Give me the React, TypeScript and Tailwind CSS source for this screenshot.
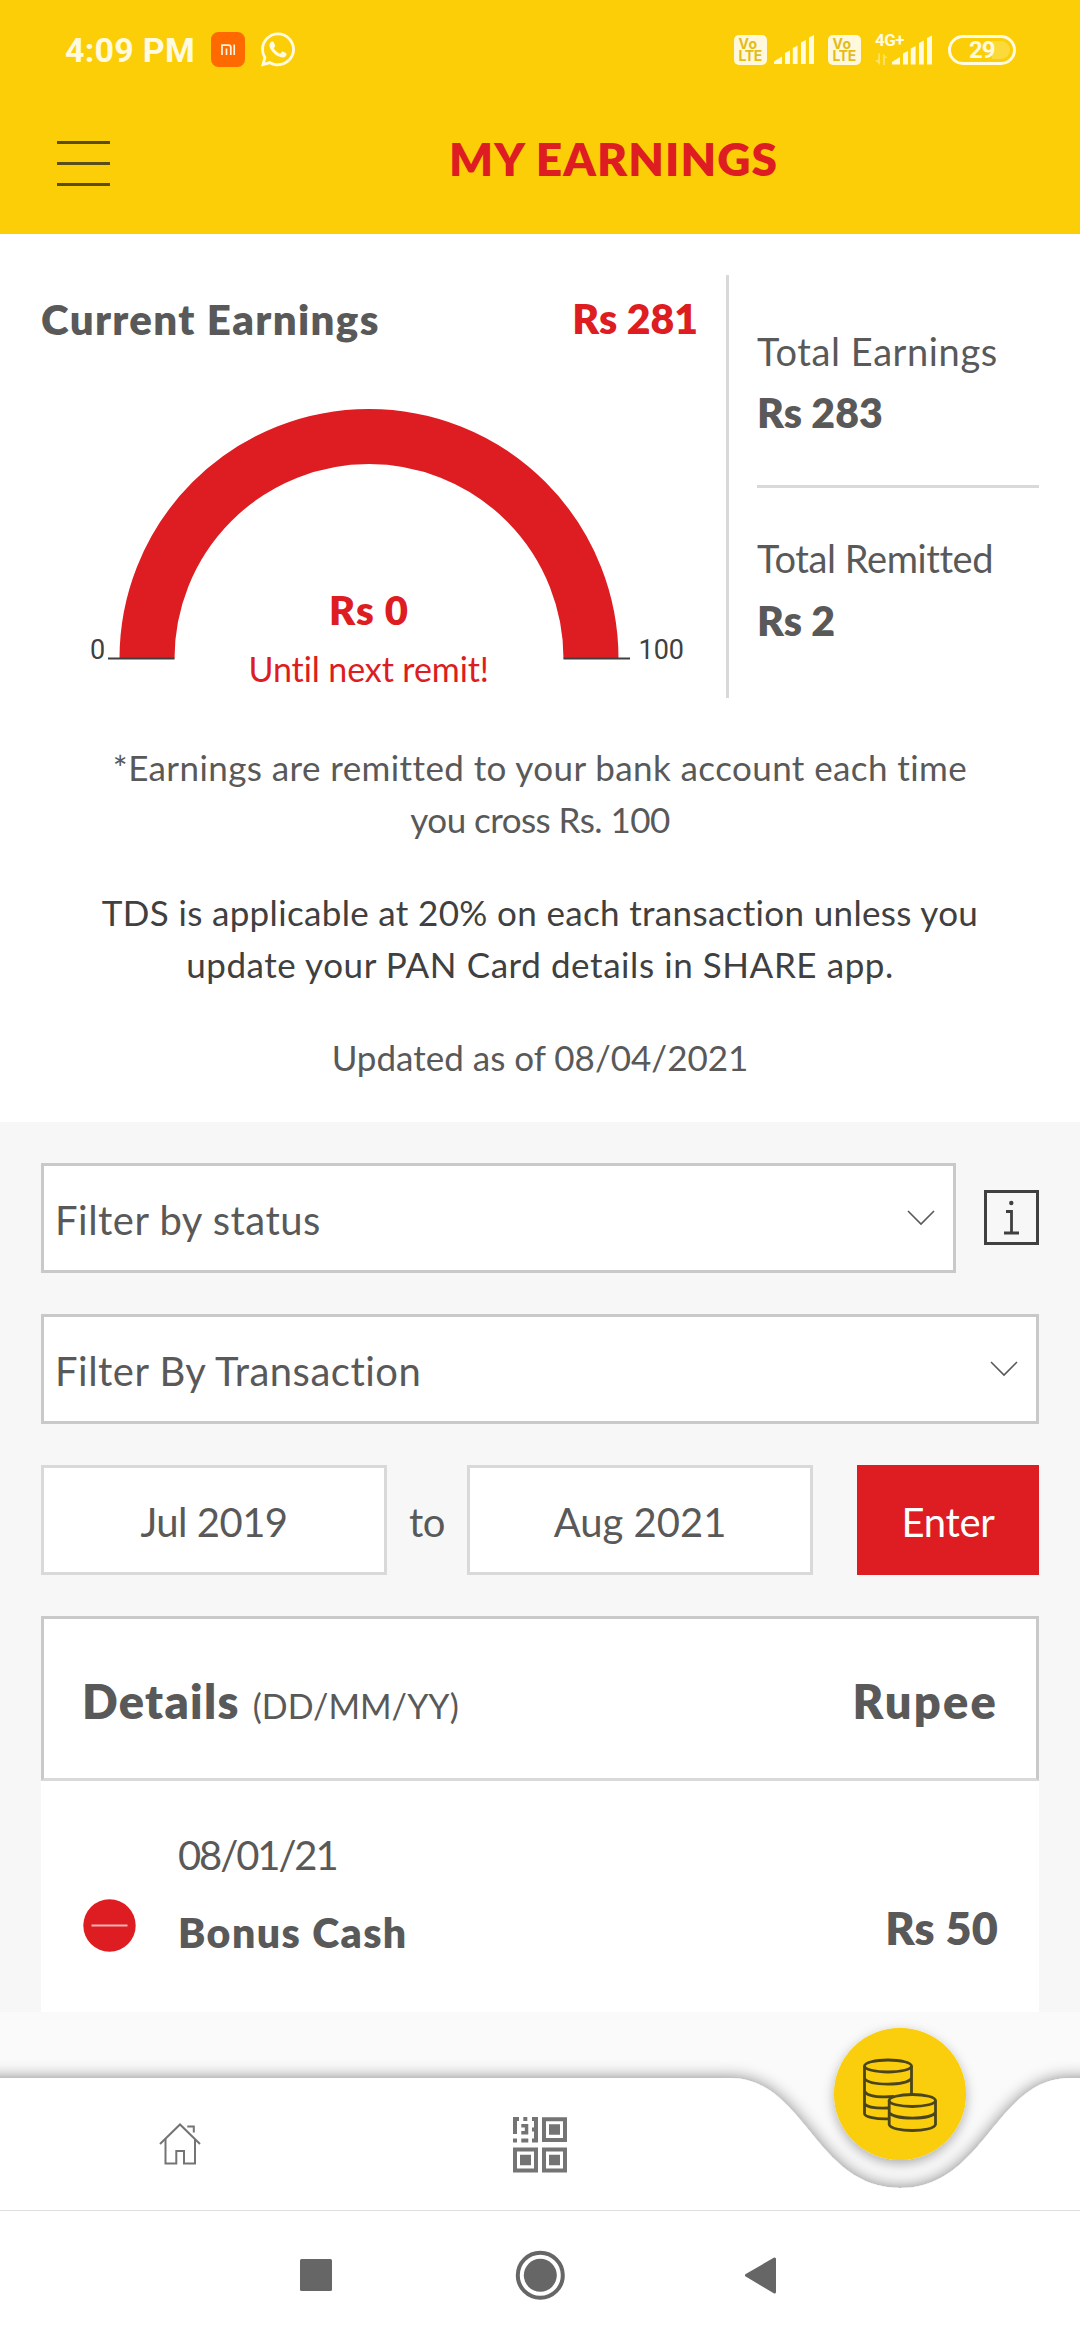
import type { ReactNode } from "react";
import { FaWhatsapp } from "react-icons/fa";

function SignalBars() {
  return (
    <g fill="#fffae0">
      <path d="M0 29V26.5L8 21.5V29Z" />
      <path d="M11 29V18L16 15.5V29Z" />
      <path d="M18.8 29V13L23.6 10.5V29Z" />
      <path d="M27 29V7.5L31.8 5V29Z" />
      <path d="M35 29V2.5L40 0V29Z" />
    </g>
  );
}

function VoLte() {
  return (
    <div className="flex h-[30px] w-[33px] flex-col rounded-[5px] bg-[#fff8dc] pl-[4.5px] pt-[3px] font-['Inter'] text-[14px] font-bold leading-[12.5px] text-[#e3bc1c]">
      <span className="tracking-[0.4px]">Vo</span>
      <span className="tracking-[-0.4px]">LTE</span>
    </div>
  );
}

function StatusBar() {
  return (
    <div className="flex h-[99px] items-center pl-[65px] pr-[64px]">
      <div className="w-[146px] whitespace-nowrap pt-[1px] font-['Roboto'] text-[34px] font-bold leading-[40px] tracking-[0.26px] text-[#fffae0]">
        4:09 PM
      </div>
      <svg className="h-[35px] w-[34px]" viewBox="0 0 34 35">
        <rect width="34" height="35" rx="7.5" fill="#ff6a00" />
        <g fill="none" stroke="#fff5e0" strokeWidth="1.7">
          <path d="M11 23V13.2H17.5Q19.8 13.2 19.8 15.5V23" />
          <path d="M15.5 16.5V23M23.2 12.4V23" />
        </g>
      </svg>
      <FaWhatsapp className="ml-[16px] h-[39px] w-[34px] text-[#fffae0]" />
      <div className="ml-auto flex items-center">
        <VoLte />
        <svg className="ml-[7px] h-[29px] w-[40px]" viewBox="0 0 40 29">
          <SignalBars />
        </svg>
        <div className="ml-[14px]">
          <VoLte />
        </div>
        <svg className="ml-[14px] h-[33px] w-[57px] overflow-visible" viewBox="0 0 57 33">
          <text x="0" y="12.5" fill="#fffae0" fontFamily="Roboto" fontWeight="700" fontSize="17" letterSpacing="-0.6">
            4G+
          </text>
          <g fill="#fffae0" opacity="0.45">
            <path d="M3.2 20.500H5V32L0 27H3.2Z" />
            <path d="M8 32V20.500L12.500 25H10V32Z" />
          </g>
          <g transform="translate(17 2.5)">
            <SignalBars />
          </g>
        </svg>
        <div className="relative ml-[16px] flex h-[30px] w-[68px] items-center rounded-full border-[3px] border-[#fffae0] pl-[18px] font-['Roboto'] text-[24px] font-bold leading-[24px] tracking-[-1px] text-[#fffae0]">
          <span className="absolute right-[3px] top-[3px] h-[18px] w-[18px] rounded-r-full bg-[#fff0a0]/35" />
          <span className="relative">29</span>
        </div>
      </div>
    </div>
  );
}

function Header() {
  return (
    <header className="h-[234px] bg-[#fbce07]">
      <StatusBar />
      <div className="flex items-start pl-[57px]">
        <div className="mt-[42px] flex w-[53px] flex-col gap-[18px]">
          <span className="h-[3px] bg-[#5a4d18]" />
          <span className="h-[3px] bg-[#5a4d18]" />
          <span className="h-[3px] bg-[#5a4d18]" />
        </div>
        <h1 className="ml-[339px] mt-[37px] whitespace-nowrap text-[46px] font-extrabold leading-[46px] tracking-[1.05px] text-[#dd1d21]">
          MY EARNINGS
        </h1>
      </div>
    </header>
  );
}

function Gauge() {
  return (
    <svg className="block h-[355px] w-[685px]" viewBox="41 343 685 355">
      <path d="M147 658.5A222 222 0 0 1 591 658.5" fill="none" stroke="#dd1d21" strokeWidth="55" />
      <path d="M108 658.5H174.5M563.5 658.5H630" stroke="#404040" strokeWidth="2" />
      <g fill="#404040" fontFamily="Roboto" fontSize="27">
        <text x="90" y="659">0</text>
        <text x="638.5" y="659">100</text>
      </g>
      <g fill="#dd1d21" fontFamily="Lato">
        <text x="329" y="625" fontSize="40" fontWeight="800" letterSpacing="0.9">
          Rs 0
        </text>
        <text x="248.5" y="682.3" fontSize="34" letterSpacing="-0.09">
          Until next remit!
        </text>
      </g>
    </svg>
  );
}

function Summary() {
  return (
    <section className="h-[888px] bg-white pt-[41px]">
      <div className="flex h-[423px] pl-[41px] pr-[41px]">
        <div className="w-[688px] border-r-[3px] border-[#d9d9d9]">
          <div className="flex h-[68px] justify-between pr-[28px] pt-[20px] text-[41px] font-extrabold leading-[48px]">
            <span className="text-[42px] tracking-[1.35px] text-[#595959]">Current Earnings</span>
            <span className="text-[#dd1d21]">Rs 281</span>
          </div>
          <Gauge />
        </div>
        <div className="ml-[28px] w-[282px] pt-[53px] text-[#595959]">
          <div className="whitespace-nowrap text-[38px] leading-[46px] tracking-[0.6px]">Total Earnings</div>
          <div className="mt-[14px] text-[41px] font-extrabold leading-[50px]">Rs 283</div>
          <div className="mt-[47px] h-[3px] bg-[#d9d9d9]" />
          <div className="mt-[47px] whitespace-nowrap text-[38px] leading-[46px] tracking-[-0.4px]">Total Remitted</div>
          <div className="mt-[15px] text-[41px] font-extrabold leading-[50px]">Rs 2</div>
        </div>
      </div>
      <div className="mt-[43px] text-center text-[35px] leading-[52px] text-[#595959]">
        <p>
          <span className="block tracking-[0.41px]">*Earnings are remitted to your bank account each time</span>
          <span className="block tracking-[-0.55px]">you cross Rs. 100</span>
        </p>
        <p className="mt-[41px] text-[#404040]">
          <span className="block tracking-[0.34px]">TDS is applicable at 20% on each transaction unless you</span>
          <span className="block tracking-[0.57px]">update your PAN Card details in SHARE app.</span>
        </p>
        <p className="mt-[41px]">Updated as of 08/04/2021</p>
      </div>
    </section>
  );
}

function Select({ children }: { children: ReactNode }) {
  return (
    <div className="flex h-[110px] flex-1 items-center justify-between border-[3px] border-[#c9c9c9] bg-white pl-[11px] pr-[18px]">
      <span className="pt-[3px] text-[40px] leading-[48px] tracking-[0.5px]">{children}</span>
      <svg className="h-[16px] w-[28px]" viewBox="0 0 28 16" fill="none" stroke="#595959" strokeWidth="1.6">
        <path d="M1 1L14 14L27 1" />
      </svg>
    </div>
  );
}

function DateField({ children }: { children: ReactNode }) {
  return (
    <div className="flex h-[110px] w-[346px] items-center justify-center border-[3px] border-[#d9d9d9] bg-white pt-[3px]">
      {children}
    </div>
  );
}

function Filters() {
  return (
    <div className="flex flex-col gap-[41px] text-[40px] leading-[48px] text-[#595959]">
      <div className="flex items-center gap-[28px]">
        <Select>Filter by status</Select>
        <svg className="mb-[1px] h-[55px] w-[55px]" viewBox="0 0 55 55">
          <rect x="1.5" y="1.5" width="52" height="52" fill="none" stroke="#404040" strokeWidth="3" />
          <circle cx="27.3" cy="13" r="2.2" fill="#404040" />
          <path d="M22 21.5H27.5V43M20 43H35" fill="none" stroke="#404040" strokeWidth="2.8" />
        </svg>
      </div>
      <div className="flex">
        <Select>Filter By Transaction</Select>
      </div>
      <div className="flex items-center">
        <DateField>
          <span className="tracking-[-0.5px]">Jul 2019</span>
        </DateField>
        <span className="w-[80px] pt-[3px] text-center tracking-[-0.5px]">to</span>
        <DateField>Aug 2021</DateField>
        <button className="ml-auto h-[110px] w-[182px] bg-[#dd1d21] pt-[3px] tracking-[-0.3px] text-white">Enter</button>
      </div>
    </div>
  );
}

function Transactions() {
  return (
    <div className="mt-[41px] text-[#595959]">
      <div className="flex h-[165px] items-baseline border-[3px] border-b-[#d9d9d9] border-x-[#c9c9c9] border-t-[#c9c9c9] bg-white pl-[38px] pr-[38px] pt-[55px]">
        <span className="text-[47px] font-extrabold leading-[54px] tracking-[1.3px]">Details</span>
        <span className="ml-[13px] text-[34px] leading-[54px]">(DD/MM/YY)</span>
        <span className="ml-auto text-[47px] font-extrabold leading-[54px] tracking-[2.2px]">
          Rupee
        </span>
      </div>
      <div className="flex h-[231px] items-start bg-white pl-[42px] pr-[41px]">
        <svg className="mt-[118px] h-[53px] w-[53px]" viewBox="0 0 53 53">
          <circle cx="26.5" cy="26.5" r="26.2" fill="#dd1d21" />
          <path d="M8.5 26.5H44.5" stroke="#f3b4b5" strokeWidth="2" />
        </svg>
        <div className="ml-[42px] pt-[50px] text-[40px] leading-[48px]">
          <div className="tracking-[-2.1px]">08/01/21</div>
          <div className="mt-[30px] text-[41px] font-extrabold tracking-[1.45px]">Bonus Cash</div>
        </div>
        <span className="ml-auto mt-[123px] text-[45px] font-extrabold leading-[48px] tracking-[0.2px]">Rs 50</span>
      </div>
    </div>
  );
}

function TabBar() {
  return (
    <nav className="h-[198px] bg-[#fafafa]">
      <svg className="block h-[198px] w-[1080px]" viewBox="0 2012 1080 198">
        <defs>
          <filter id="edge" x="-10%" y="-30%" width="120%" height="160%">
            <feDropShadow dx="0" dy="0" stdDeviation="8" floodColor="#000" floodOpacity="0.48" />
          </filter>
          <filter id="fab" x="-30%" y="-30%" width="160%" height="160%">
            <feDropShadow dx="0" dy="4" stdDeviation="6" floodColor="#000" floodOpacity="0.3" />
          </filter>
        </defs>
        <path
          d="M-60 2078H730C805 2078 815 2188 900 2188S995 2078 1070 2078H1140V2260H-60Z"
          fill="#fff"
          filter="url(#edge)"
        />
        <circle cx="900" cy="2094" r="66" fill="#fbce07" filter="url(#fab)" />
        <g fill="none" stroke="#4a451c" strokeWidth="2.8">
          <ellipse cx="888" cy="2066" rx="23.5" ry="6" />
          <path d="M864.5 2066V2113.5C864.5 2117 876 2119.3 889 2118.8M911.5 2066V2094" />
          <path d="M864.5 2078.5C870 2086 905 2086 911.5 2078.5M864.5 2091.5C868 2097 880 2097.5 894 2096.5M864.5 2104C868 2108 878 2108.5 889 2108" />
          <ellipse cx="912.3" cy="2100.5" rx="23.2" ry="6" />
          <path d="M889.2 2100.5V2124.5C891 2132.5 933.5 2132.5 935.5 2124.5V2100.5M889.2 2112.5C894 2120 931 2120 935.5 2112.5" />
        </g>
        <g fill="none" stroke="#747474" strokeWidth="2">
          <path d="M160 2144L180 2124.5L200 2144" />
          <path d="M165.5 2139V2163.5H176.3V2151H184V2163.5H195V2139" />
          <path d="M187.3 2126.5H193.8V2132.5" />
        </g>
        <path
          d="M544 2119.2H565V2140H544ZM515 2149.5H536V2170.5H515ZM544 2149.5H565V2170.5H544Z"
          fill="none"
          stroke="#747474"
          strokeWidth="4"
        />
        <g fill="#747474">
          <path d="M549 2124.2h11v10.5h-11zM520 2154.7h11v10.5h-11zM549 2154.7h11v10.5h-11z" />
          <path d="M513 2117h6v4h-2v13h-4zM523.3 2117h4v4h-4zM532 2117h6v25.5h-6v-4h2v-7h-2v-4h2v-6.5h-2zM513 2138.5h4v4h-4zM521.3 2138.5h7v4h-7zM521.3 2124h7v10.5h-7v-3.5h3.5v-3.5h-3.5z" />
        </g>
      </svg>
    </nav>
  );
}

function SystemNav() {
  return (
    <div className="h-[130px] border-t border-[#dedede] bg-white">
      <svg className="block h-[129px] w-[1080px]" viewBox="0 2211 1080 129" fill="#666">
        <rect x="300" y="2259" width="32" height="32" rx="1.5" />
        <circle cx="540.3" cy="2275.3" r="22.5" fill="none" stroke="#666" strokeWidth="4" />
        <circle cx="540.3" cy="2275.3" r="16.5" />
        <path d="M746.5 2275.3L774.5 2259V2292Z" stroke="#666" strokeWidth="3" strokeLinejoin="round" />
      </svg>
    </div>
  );
}

export default function App() {
  return (
    <div className="flex h-[2340px] w-[1080px] flex-col overflow-hidden bg-white font-['Lato',sans-serif]">
      <Header />
      <Summary />
      <main className="h-[890px] bg-[#f7f7f7] px-[41px] pt-[41px]">
        <Filters />
        <Transactions />
      </main>
      <TabBar />
      <SystemNav />
    </div>
  );
}
